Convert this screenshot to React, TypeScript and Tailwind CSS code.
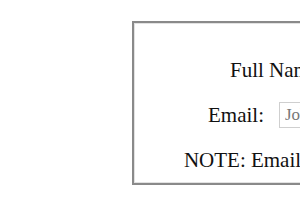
export default function App() {
  return (
    <div className="w-[300px] h-[210px] overflow-hidden bg-white">
      <div className="pt-[21px] pl-[132px]">
        <div className="w-[403px] h-[164px] border-2 border-[#8a8a8a] shadow-[inset_0_0_0_1px_#e2e2e2] flex flex-col items-center pt-[32px] gap-[15px] [font-family:'Liberation_Serif',serif] text-[21px] leading-[30px] text-[#111]">
          <div className="flex items-center gap-[15px]">
            <span>Full Name:</span>
            <input
              className="w-[97px] h-[26px] border border-[#cfcfcf] px-[5px] text-[17px] outline-none"
              placeholder="John Doe"
            />
          </div>
          <div className="flex items-center gap-[15px]">
            <span>Email:</span>
            <input
              className="w-[180px] h-[26px] border border-[#cfcfcf] px-[5px] text-[17px] placeholder:text-[#777] outline-none"
              placeholder="JohnDoe@example.com"
            />
          </div>
          <div>NOTE: Email will be used to log in</div>
        </div>
      </div>
    </div>
  );
}
